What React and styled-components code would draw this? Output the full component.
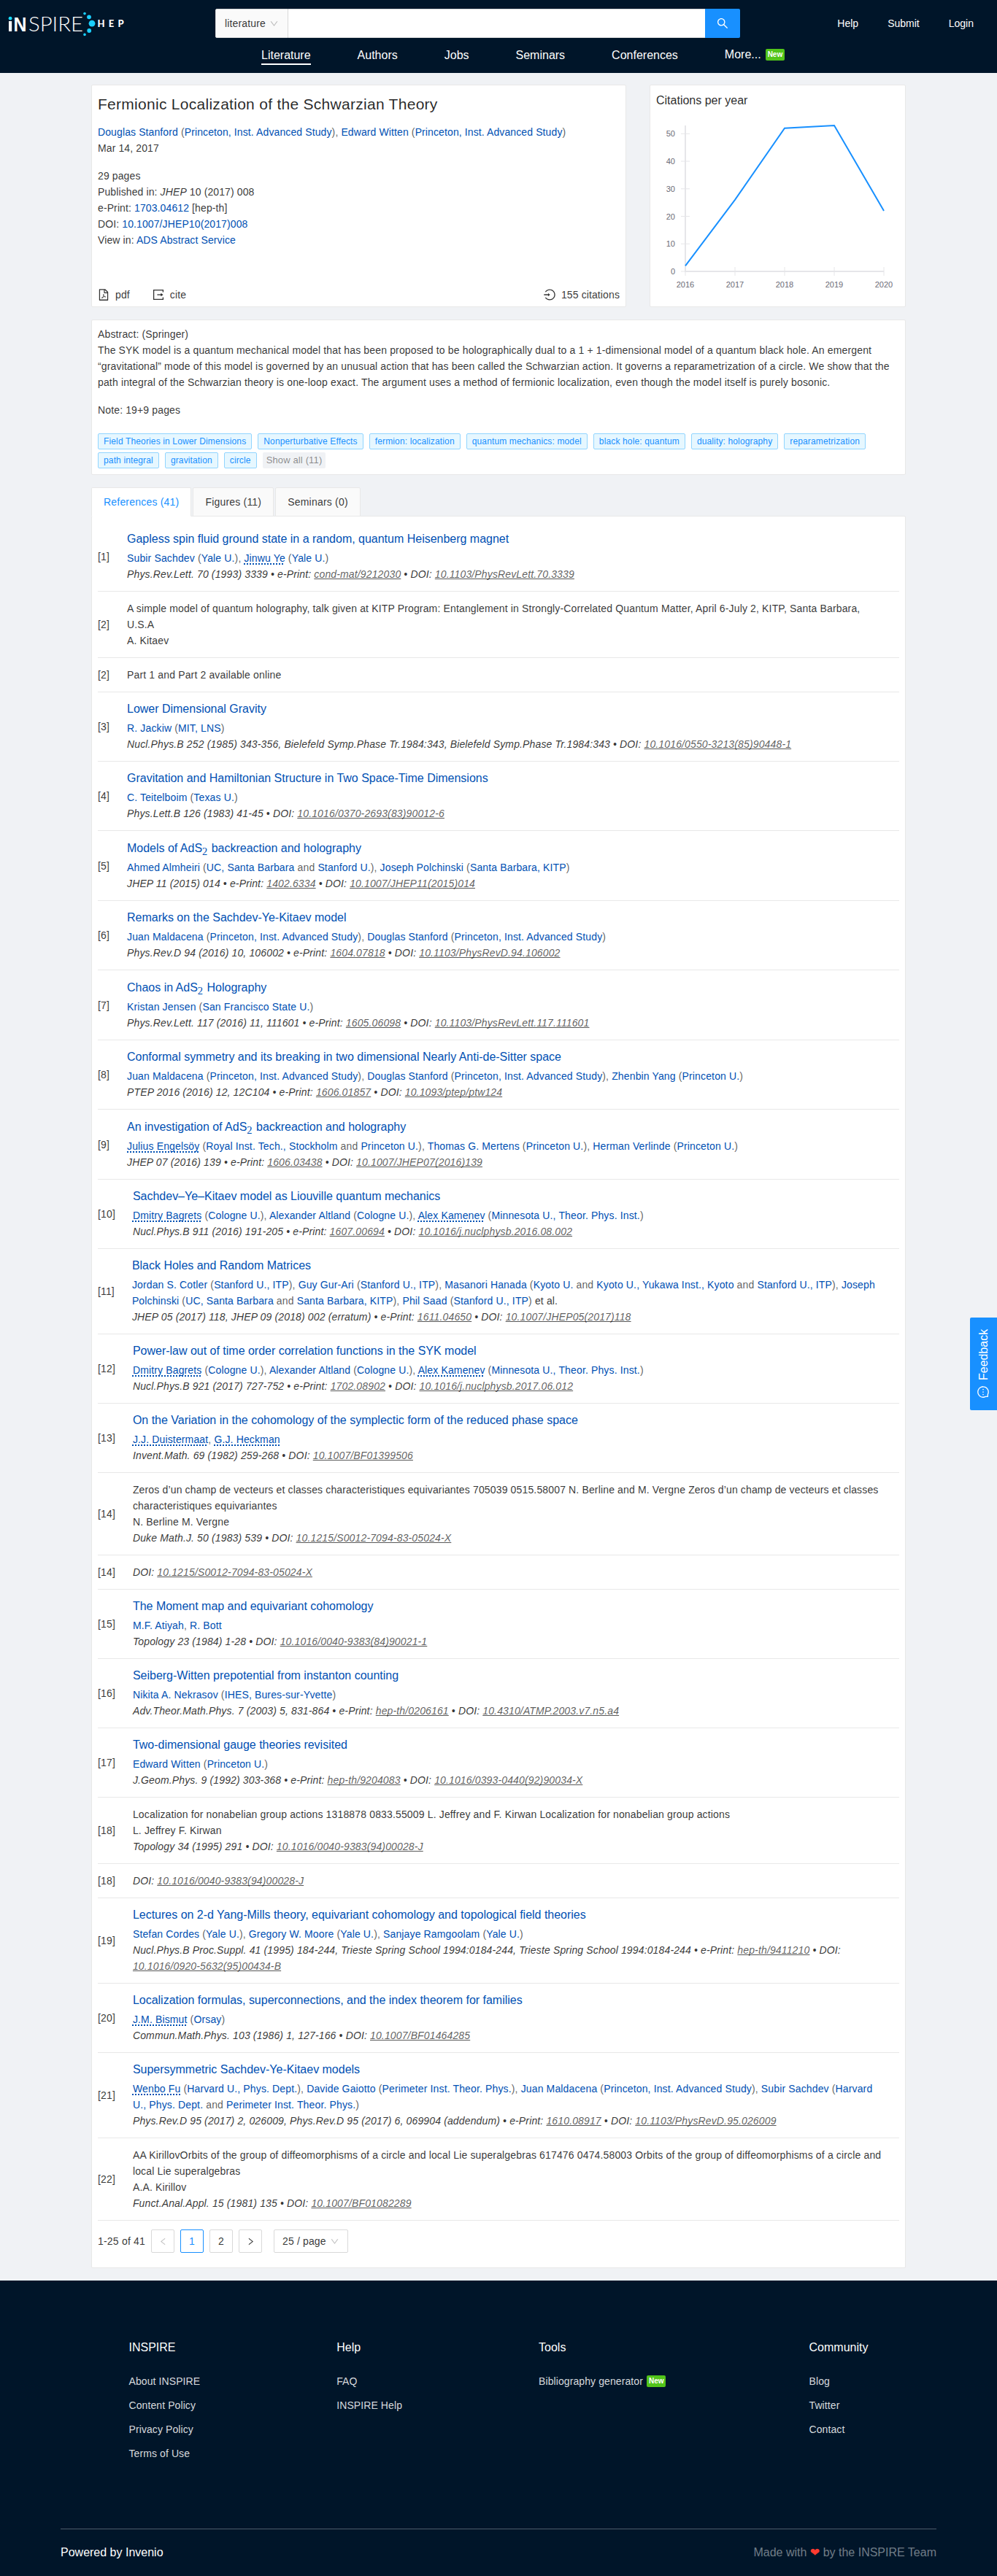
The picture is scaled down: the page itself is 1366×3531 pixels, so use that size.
import React from 'react';
import styled, { createGlobalStyle, css } from 'styled-components';
import {
  AiOutlineSearch,
  AiOutlineDown,
  AiOutlineFilePdf,
  AiOutlineLogin,
  AiOutlineLeft,
  AiOutlineRight,
  AiOutlineMessage,
} from 'react-icons/ai';

const GlobalStyle = createGlobalStyle`
  *, *::before, *::after { box-sizing: border-box; }
  body {
    margin: 0;
    background: #f0f2f5;
    color: rgba(0, 0, 0, 0.8);
    font-family: "Liberation Sans", Arial, sans-serif;
    font-size: 14px;
    line-height: 22px;
    letter-spacing: 0.14px;
    font-variant: tabular-nums;
  }
  a { color: #0050b3; text-decoration: none; }
  svg { display: block; }
`;

/* ---------- header ---------- */

const Header = styled.header`
  height: 100px;
  background: #001529;
  color: #fff;
`;

const TopBar = styled.div`
  height: 64px;
  display: flex;
  align-items: center;
`;

const LogoBox = styled.div`
  width: 295px;
  height: 64px;
  padding-left: 8px;
  letter-spacing: 0;
`;

const SearchBox = styled.div`
  width: 719px;
  height: 40px;
  display: flex;
`;

const ScopeSelect = styled.div`
  width: 100px;
  padding: 0 12px;
  display: flex;
  align-items: center;
  justify-content: space-between;
  background: #fafafa;
  border: 1px solid #d9d9d9;
  border-radius: 2px 0 0 2px;
  color: rgba(0, 0, 0, 0.8);
  svg { color: rgba(0, 0, 0, 0.25); }
`;

const SearchInput = styled.div`
  flex: 1;
  background: #fff;
  border: 1px solid #d9d9d9;
  border-width: 1px 0;
`;

const SearchButton = styled.div`
  width: 48px;
  display: flex;
  align-items: center;
  justify-content: center;
  background: #1890ff;
  border-radius: 0 2px 2px 0;
`;

const UserLinks = styled.nav`
  margin-left: auto;
  padding-right: 32px;
  display: flex;
  gap: 40px;
  letter-spacing: 0;
  a { color: #fff; }
`;

const MainNav = styled.nav`
  padding: 1px 0 0 358px;
  display: flex;
  gap: 64px;
  font-size: 16px;
  line-height: 22px;
  letter-spacing: 0;
`;

const NavLink = styled.a`
  height: 24px;
  display: flex;
  color: #fff;
  ${(p) => p.$active && css`border-bottom: 2px solid #fff;`}
  ${(p) => p.$raised && css`margin-top: -1px;`}
`;

const NewBadge = styled.span`
  display: inline-block;
  height: 16px;
  margin: ${(p) => p.$margin || '0'};
  padding: 0 3px;
  border-radius: 2px;
  background: #52c41a;
  color: #fff;
  font-size: 10px;
  font-weight: bold;
  line-height: 16px;
  letter-spacing: 0;
`;

function Logo() {
  return (
    <svg width="165" height="64" viewBox="8 0 165 64" fontFamily="Liberation Sans">
      <circle cx="14.1" cy="25.2" r="2.4" fill="#1bdcff" />
      <rect x="12" y="29" width="4.2" height="14" fill="#fff" />
      <text x="18.6" y="43" fontSize="27" fontWeight="700" fill="#fff" textLength="18" lengthAdjust="spacingAndGlyphs">N</text>
      <text x="39" y="43" fontSize="27" fontFamily="Lato" fontWeight="300" fill="#fff" textLength="75" lengthAdjust="spacingAndGlyphs">SPIRE</text>
      <g fill="#1bcfff">
        <circle cx="116" cy="18.6" r="1.8" />
        <circle cx="122" cy="23.3" r="2.9" />
        <circle cx="126" cy="32.2" r="4.4" />
        <circle cx="122.2" cy="42" r="2.9" />
        <circle cx="116" cy="47.4" r="1.8" />
      </g>
      <text x="133.6" y="37" fontSize="13" fontFamily="Lato" fontWeight="900" fill="#fff" textLength="36" lengthAdjust="spacing">HEP</text>
    </svg>
  );
}

/* ---------- cards ---------- */

const Page = styled.main`
  width: 1116px;
  margin: 16px 0 0 125px;
`;

const Card = styled.section`
  background: #fff;
  border: 1px solid #e8e8e8;
  border-radius: 2px;
  padding: 8px;
`;

const SummaryRow = styled.div`
  display: flex;
  justify-content: space-between;
  height: 305px;
`;

const RecordCard = styled(Card)`
  width: 733px;
  display: flex;
  flex-direction: column;
  letter-spacing: 0.11px;
`;

const RecordTitle = styled.h1`
  margin: 2px 0 11px;
  font-size: 21px;
  line-height: 32px;
  font-weight: normal;
  letter-spacing: 0.28px;
  color: rgba(0, 0, 0, 0.85);
`;

const Line = styled.div`
  ${(p) => p.$gap && css`margin-top: 16px;`}
  ${(p) => p.$wide && css`letter-spacing: 0.15px;`}
`;

const Muted = styled.span`
  color: rgba(0, 0, 0, 0.65);
`;

const Actions = styled.div`
  margin-top: auto;
  margin-bottom: -3px;
  display: flex;
  gap: 24px;
`;

const Action = styled.span`
  display: flex;
  align-items: center;
  gap: 7px;
  margin-left: ${(p) => (p.$end ? 'auto' : '-1px')};
  padding-right: ${(p) => (p.$end ? '0' : '7px')};
`;

const ChartCard = styled(Card)`
  width: 351px;
`;

const ChartTitle = styled.h2`
  margin: 1px 0 0;
  font-size: 16px;
  line-height: 24px;
  font-weight: normal;
  letter-spacing: 0;
  color: rgba(0, 0, 0, 0.85);
`;

const AbstractCard = styled(Card)`
  height: 213px;
  margin-top: 17px;
`;

const Tags = styled.div`
  display: flex;
  flex-wrap: wrap;
  gap: 4px 8px;
  margin-top: 21px;
`;

const Tag = styled.span`
  height: 22px;
  padding: ${(p) => (p.$more ? '0 5px' : '0 7px')};
  border: ${(p) => (p.$more ? '0' : '1px solid #91d5ff')};
  border-radius: 2px;
  background: ${(p) => (p.$more ? '#f0f2f5' : '#e6f7ff')};
  color: ${(p) => (p.$more ? 'rgba(0,0,0,.45)' : '#1890ff')};
  font-size: ${(p) => (p.$more ? '13px' : '12px')};
  line-height: ${(p) => (p.$more ? '22px' : '20px')};
  letter-spacing: 0.14px;
`;

const Tabs = styled.div`
  display: flex;
  gap: 2px;
  height: 40px;
  margin: 17px 0 -1px;
`;

const Tab = styled.div`
  padding: 0 16px;
  line-height: 38px;
  border: 1px solid #e8e8e8;
  border-bottom-color: ${(p) => (p.$active ? '#fff' : '#e8e8e8')};
  border-radius: 2px 2px 0 0;
  background: ${(p) => (p.$active ? '#fff' : '#fafafa')};
  color: ${(p) => (p.$active ? '#1890ff' : 'rgba(0,0,0,.8)')};
  letter-spacing: 0.2px;
  position: relative;
`;

function ExportIcon() {
  return (
    <svg width="18" height="18" viewBox="0 0 18 18" fill="none" stroke="currentColor" strokeWidth="1.3">
      <path d="M15.4 5.4V2.6H2.6V15.4H15.4V12.6" />
      <path d="M7.4 9H13.4" />
      <path d="M12.4 6.8L15.6 9L12.4 11.2Z" fill="currentColor" stroke="none" />
    </svg>
  );
}

/* ---------- chart ---------- */

const points = [[2016, 2], [2017, 26], [2018, 52], [2019, 53], [2020, 22]];
const xOf = (year) => 40 + (year - 2016) * 68;
const yOf = (n) => 222 - n * 3.774;

function CitationChart() {
  return (
    <svg width="333" height="262" viewBox="0 0 333 262" fontSize="11" fill="#6b6b76" fontFamily="Liberation Sans" letterSpacing="0">
      <g stroke="#e6e6e9" strokeWidth="1">
        {[0, 10, 20, 30, 40, 50].map((n) => <line key={n} x1="34" x2="46" y1={yOf(n)} y2={yOf(n)} />)}
        {points.map(([y]) => <line key={y} x1={xOf(y)} x2={xOf(y)} y1="216" y2="228" />)}
      </g>
      <path d="M40 22V222H312" fill="none" stroke="#e6e6e9" strokeWidth="2" />
      {[0, 10, 20, 30, 40, 50].map((n) => <text key={n} x="26" y={yOf(n) + 4} textAnchor="end">{n}</text>)}
      {points.map(([y]) => <text key={y} x={xOf(y)} y="244" textAnchor="middle">{y}</text>)}
      <polyline points={points.map(([y, n]) => `${xOf(y)},${yOf(n)}`).join(' ')} fill="none" stroke="#1890ff" strokeWidth="2" />
    </svg>
  );
}

/* ---------- references ---------- */

const Item = styled.div`
  display: flex;
  align-items: center;
  gap: 24px;
  padding: 12px 21px 12px 0;
  border-bottom: 1px solid #e8e8e8;
`;

const Label = styled.div`
  flex: none;
`;

const ItemTitle = styled.div`
  height: ${(p) => (p.$math ? 27 : 26)}px;
  padding-top: ${(p) => (p.$math ? 1 : 0)}px;
  font-size: 16px;
  line-height: 22px;
  letter-spacing: -0.01px;
`;

const MathSub = styled.span`
  font-family: "Liberation Serif", serif;
  font-size: 14.5px;
  position: relative;
  top: 4px;
  margin-right: 1px;
`;

const AuthorLink = styled.a`
  ${(p) => p.$dotted && css`
    text-decoration: underline dotted;
    text-decoration-thickness: 1.5px;
    text-underline-offset: 2px;
    text-decoration-skip-ink: none;
  `}
`;

const Publication = styled.div`
  font-style: italic;
  a { color: rgba(0, 0, 0, 0.65); text-decoration: underline; text-decoration-skip-ink: none; }
`;

// Authors are written "Name|Affiliation|Affiliation"; a leading * marks a name without a profile.
const refs = [
  { l: 1, t: 'Gapless spin fluid ground state in a random, quantum Heisenberg magnet', a: ['Subir Sachdev|Yale U.', '*Jinwu Ye|Yale U.'], p: 'Phys.Rev.Lett. 70 (1993) 3339', e: 'cond-mat/9212030', d: '10.1103/PhysRevLett.70.3339' },
  { l: 2, x: ['A simple model of quantum holography, talk given at KITP Program: Entanglement in Strongly-Correlated Quantum Matter, April 6-July 2, KITP, Santa Barbara, U.S.A', 'A. Kitaev'] },
  { l: 2, x: ['Part 1 and Part 2 available online'] },
  { l: 3, t: 'Lower Dimensional Gravity', a: ['R. Jackiw|MIT, LNS'], p: 'Nucl.Phys.B 252 (1985) 343-356, Bielefeld Symp.Phase Tr.1984:343, Bielefeld Symp.Phase Tr.1984:343', d: '10.1016/0550-3213(85)90448-1' },
  { l: 4, t: 'Gravitation and Hamiltonian Structure in Two Space-Time Dimensions', a: ['C. Teitelboim|Texas U.'], p: 'Phys.Lett.B 126 (1983) 41-45', d: '10.1016/0370-2693(83)90012-6' },
  { l: 5, t: 'Models of AdS_2 backreaction and holography', a: ['Ahmed Almheiri|UC, Santa Barbara|Stanford U.', 'Joseph Polchinski|Santa Barbara, KITP'], p: 'JHEP 11 (2015) 014', e: '1402.6334', d: '10.1007/JHEP11(2015)014' },
  { l: 6, t: 'Remarks on the Sachdev-Ye-Kitaev model', a: ['Juan Maldacena|Princeton, Inst. Advanced Study', 'Douglas Stanford|Princeton, Inst. Advanced Study'], p: 'Phys.Rev.D 94 (2016) 10, 106002', e: '1604.07818', d: '10.1103/PhysRevD.94.106002' },
  { l: 7, t: 'Chaos in AdS_2 Holography', a: ['Kristan Jensen|San Francisco State U.'], p: 'Phys.Rev.Lett. 117 (2016) 11, 111601', e: '1605.06098', d: '10.1103/PhysRevLett.117.111601' },
  { l: 8, t: 'Conformal symmetry and its breaking in two dimensional Nearly Anti-de-Sitter space', a: ['Juan Maldacena|Princeton, Inst. Advanced Study', 'Douglas Stanford|Princeton, Inst. Advanced Study', 'Zhenbin Yang|Princeton U.'], p: 'PTEP 2016 (2016) 12, 12C104', e: '1606.01857', d: '10.1093/ptep/ptw124' },
  { l: 9, t: 'An investigation of AdS_2 backreaction and holography', a: ['*Julius Engelsöy|Royal Inst. Tech., Stockholm|Princeton U.', 'Thomas G. Mertens|Princeton U.', 'Herman Verlinde|Princeton U.'], p: 'JHEP 07 (2016) 139', e: '1606.03438', d: '10.1007/JHEP07(2016)139' },
  { l: 10, t: 'Sachdev–Ye–Kitaev model as Liouville quantum mechanics', a: ['*Dmitry Bagrets|Cologne U.', 'Alexander Altland|Cologne U.', '*Alex Kamenev|Minnesota U., Theor. Phys. Inst.'], p: 'Nucl.Phys.B 911 (2016) 191-205', e: '1607.00694', d: '10.1016/j.nuclphysb.2016.08.002' },
  { l: 11, t: 'Black Holes and Random Matrices', a: ['Jordan S. Cotler|Stanford U., ITP', 'Guy Gur-Ari|Stanford U., ITP', 'Masanori Hanada|Kyoto U.|Kyoto U., Yukawa Inst., Kyoto|Stanford U., ITP', 'Joseph Polchinski|UC, Santa Barbara|Santa Barbara, KITP', 'Phil Saad|Stanford U., ITP'], etal: true, p: 'JHEP 05 (2017) 118, JHEP 09 (2018) 002 (erratum)', e: '1611.04650', d: '10.1007/JHEP05(2017)118' },
  { l: 12, t: 'Power-law out of time order correlation functions in the SYK model', a: ['*Dmitry Bagrets|Cologne U.', 'Alexander Altland|Cologne U.', '*Alex Kamenev|Minnesota U., Theor. Phys. Inst.'], p: 'Nucl.Phys.B 921 (2017) 727-752', e: '1702.08902', d: '10.1016/j.nuclphysb.2017.06.012' },
  { l: 13, t: 'On the Variation in the cohomology of the symplectic form of the reduced phase space', a: ['*J.J. Duistermaat', '*G.J. Heckman'], p: 'Invent.Math. 69 (1982) 259-268', d: '10.1007/BF01399506' },
  { l: 14, x: ['Zeros d’un champ de vecteurs et classes characteristiques equivariantes 705039 0515.58007 N. Berline and M. Vergne Zeros d’un champ de vecteurs et classes characteristiques equivariantes', 'N. Berline M. Vergne'], p: 'Duke Math.J. 50 (1983) 539', d: '10.1215/S0012-7094-83-05024-X' },
  { l: 14, d: '10.1215/S0012-7094-83-05024-X' },
  { l: 15, t: 'The Moment map and equivariant cohomology', a: ['M.F. Atiyah', 'R. Bott'], p: 'Topology 23 (1984) 1-28', d: '10.1016/0040-9383(84)90021-1' },
  { l: 16, t: 'Seiberg-Witten prepotential from instanton counting', a: ['Nikita A. Nekrasov|IHES, Bures-sur-Yvette'], p: 'Adv.Theor.Math.Phys. 7 (2003) 5, 831-864', e: 'hep-th/0206161', d: '10.4310/ATMP.2003.v7.n5.a4' },
  { l: 17, t: 'Two-dimensional gauge theories revisited', a: ['Edward Witten|Princeton U.'], p: 'J.Geom.Phys. 9 (1992) 303-368', e: 'hep-th/9204083', d: '10.1016/0393-0440(92)90034-X' },
  { l: 18, x: ['Localization for nonabelian group actions 1318878 0833.55009 L. Jeffrey and F. Kirwan Localization for nonabelian group actions', 'L. Jeffrey F. Kirwan'], p: 'Topology 34 (1995) 291', d: '10.1016/0040-9383(94)00028-J' },
  { l: 18, d: '10.1016/0040-9383(94)00028-J' },
  { l: 19, t: 'Lectures on 2-d Yang-Mills theory, equivariant cohomology and topological field theories', a: ['Stefan Cordes|Yale U.', 'Gregory W. Moore|Yale U.', 'Sanjaye Ramgoolam|Yale U.'], p: 'Nucl.Phys.B Proc.Suppl. 41 (1995) 184-244, Trieste Spring School 1994:0184-244, Trieste Spring School 1994:0184-244', e: 'hep-th/9411210', d: '10.1016/0920-5632(95)00434-B' },
  { l: 20, t: 'Localization formulas, superconnections, and the index theorem for families', a: ['*J.M. Bismut|Orsay'], p: 'Commun.Math.Phys. 103 (1986) 1, 127-166', d: '10.1007/BF01464285' },
  { l: 21, t: 'Supersymmetric Sachdev-Ye-Kitaev models', a: ['*Wenbo Fu|Harvard U., Phys. Dept.', 'Davide Gaiotto|Perimeter Inst. Theor. Phys.', 'Juan Maldacena|Princeton, Inst. Advanced Study', 'Subir Sachdev|Harvard U., Phys. Dept.|Perimeter Inst. Theor. Phys.'], p: 'Phys.Rev.D 95 (2017) 2, 026009, Phys.Rev.D 95 (2017) 6, 069904 (addendum)', e: '1610.08917', d: '10.1103/PhysRevD.95.026009' },
  { l: 22, x: ['AA KirillovOrbits of the group of diffeomorphisms of a circle and local Lie superalgebras 617476 0474.58003 Orbits of the group of diffeomorphisms of a circle and local Lie superalgebras', 'A.A. Kirillov'], p: 'Funct.Anal.Appl. 15 (1981) 135', d: '10.1007/BF01082289' },
];

function Authors({ list, etal }) {
  return (
    <Line>
      {list.map((entry, i) => {
        const [name, ...affs] = entry.split('|');
        const dotted = name.startsWith('*');
        return (
          <React.Fragment key={entry}>
            {i > 0 && <Muted>, </Muted>}
            <AuthorLink $dotted={dotted}>{dotted ? name.slice(1) : name}</AuthorLink>
            {affs.length > 0 && (
              <Muted>
                {' ('}
                {affs.map((aff, j) => (
                  <React.Fragment key={aff}>{j > 0 && ' and '}<a>{aff}</a></React.Fragment>
                ))}
                )
              </Muted>
            )}
          </React.Fragment>
        );
      })}
      {etal && ' et al.'}
    </Line>
  );
}

function Reference({ r }) {
  const [before, after] = r.t ? r.t.split('_2') : [];
  return (
    <Item>
      <Label>[{r.l}]</Label>
      <div>
        {r.t && (
          <ItemTitle $math={after !== undefined}>
            <a>{before}{after !== undefined && <><MathSub>2</MathSub>{after}</>}</a>
          </ItemTitle>
        )}
        {r.x && r.x.map((text) => <Line key={text} $wide>{text}</Line>)}
        {r.a && <Authors list={r.a} etal={r.etal} />}
        {r.d && (
          <Publication>
            {r.p && `${r.p} • `}
            {r.e && <>e-Print: <a>{r.e}</a>{' • '}</>}
            DOI: <a>{r.d}</a>
          </Publication>
        )}
      </div>
    </Item>
  );
}

const Pagination = styled.div`
  display: flex;
  align-items: center;
  gap: 8px;
  padding: 12px 0;
`;

const PageButton = styled.span`
  width: ${(p) => (p.$wide ? '102px' : '32px')};
  height: 32px;
  margin-left: ${(p) => (p.$wide ? '8px' : '0')};
  padding: ${(p) => (p.$wide ? '0 11px' : '0')};
  display: flex;
  align-items: center;
  justify-content: ${(p) => (p.$wide ? 'space-between' : 'center')};
  border: 1px solid ${(p) => (p.$active ? '#1890ff' : '#d9d9d9')};
  border-radius: 2px;
  color: ${(p) => (p.$active ? '#1890ff' : p.$disabled ? 'rgba(0,0,0,.25)' : 'rgba(0,0,0,.8)')};
`;

const PageRange = styled.span`
  letter-spacing: 0.2px;
`;

const Caret = styled(AiOutlineDown)`
  color: rgba(0, 0, 0, 0.25);
`;

/* ---------- footer ---------- */

const Footer = styled.footer`
  height: 405px;
  margin-top: 17px;
  padding: 80px 83px 0;
  background: #001529;
  color: #fff;
`;

const FooterColumns = styled.div`
  height: 260px;
  display: flex;
  justify-content: space-around;
`;

const FooterColumn = styled.div`
  h2 {
    margin: 0 0 23px;
    font-size: 16px;
    line-height: 24px;
    font-weight: normal;
    letter-spacing: 0;
  }
`;

const FooterLink = styled.a`
  display: flex;
  align-items: center;
  margin-bottom: 11px;
  color: rgba(255, 255, 255, 0.85);
  letter-spacing: 0.09px;
`;

const FooterBottom = styled.div`
  border-top: 1px solid rgba(255, 255, 255, 0.3);
  padding-top: 20px;
  display: flex;
  justify-content: space-between;
  font-size: 16px;
  line-height: 24px;
  letter-spacing: 0;
`;

const MadeWith = styled.span`
  color: rgba(255, 255, 255, 0.45);
`;

const Heart = styled.span`
  color: #ff3b30;
  font-family: "DejaVu Sans", sans-serif;
  line-height: 1;
`;

const Feedback = styled.div`
  position: absolute;
  top: 1806px;
  right: 0;
  width: 37px;
  height: 127px;
  display: flex;
  align-items: center;
  justify-content: center;
  gap: 7px;
  writing-mode: vertical-rl;
  transform: rotate(180deg);
  background: #1890ff;
  border-radius: 0 2px 2px 0;
  color: #fff;
  font-size: 16px;
  letter-spacing: 0;
  svg { transform: rotate(90deg); }
`;

const footerColumns = [
  ['INSPIRE', ['About INSPIRE', 'Content Policy', 'Privacy Policy', 'Terms of Use']],
  ['Help', ['FAQ', 'INSPIRE Help']],
  ['Tools', ['Bibliography generator']],
  ['Community', ['Blog', 'Twitter', 'Contact']],
];

const keywords = ['Field Theories in Lower Dimensions', 'Nonperturbative Effects', 'fermion: localization', 'quantum mechanics: model', 'black hole: quantum', 'duality: holography', 'reparametrization', 'path integral', 'gravitation', 'circle'];

export default function App() {
  return (
    <>
      <GlobalStyle />
      <Header>
        <TopBar>
          <LogoBox><Logo /></LogoBox>
          <SearchBox>
            <ScopeSelect>literature <AiOutlineDown size={13} /></ScopeSelect>
            <SearchInput />
            <SearchButton><AiOutlineSearch size={18} /></SearchButton>
          </SearchBox>
          <UserLinks><a>Help</a><a>Submit</a><a>Login</a></UserLinks>
        </TopBar>
        <MainNav>
          <NavLink $active>Literature</NavLink>
          <NavLink>Authors</NavLink>
          <NavLink>Jobs</NavLink>
          <NavLink>Seminars</NavLink>
          <NavLink>Conferences</NavLink>
          <NavLink $raised>More...<NewBadge $margin="3px 0 0 6px">New</NewBadge></NavLink>
        </MainNav>
      </Header>

      <Page>
        <SummaryRow>
          <RecordCard>
            <RecordTitle>Fermionic Localization of the Schwarzian Theory</RecordTitle>
            <Authors list={['Douglas Stanford|Princeton, Inst. Advanced Study', 'Edward Witten|Princeton, Inst. Advanced Study']} />
            <Line>Mar 14, 2017</Line>
            <Line $gap>29 pages</Line>
            <Line>Published in: <i>JHEP</i> 10 (2017) 008</Line>
            <Line>e-Print: <a>1703.04612</a> [hep-th]</Line>
            <Line>DOI: <a>10.1007/JHEP10(2017)008</a></Line>
            <Line>View in: <a>ADS Abstract Service</a></Line>
            <Actions>
              <Action><AiOutlineFilePdf size={18} />pdf</Action>
              <Action><ExportIcon />cite</Action>
              <Action $end><AiOutlineLogin size={18} />155 citations</Action>
            </Actions>
          </RecordCard>
          <ChartCard>
            <ChartTitle>Citations per year</ChartTitle>
            <CitationChart />
          </ChartCard>
        </SummaryRow>

        <AbstractCard>
          <Line>Abstract: (Springer)</Line>
          <Line $wide>
            The SYK model is a quantum mechanical model that has been proposed to be holographically dual to a 1 + 1-dimensional model of a quantum black hole. An emergent “gravitational” mode of this model is governed by an unusual action that has been called the Schwarzian action. It governs a reparametrization of a circle. We show that the path integral of the Schwarzian theory is one-loop exact. The argument uses a method of fermionic localization, even though the model itself is purely bosonic.
          </Line>
          <Line $gap>Note: 19+9 pages</Line>
          <Tags>
            {keywords.map((k) => <Tag key={k}>{k}</Tag>)}
            <Tag $more>Show all (11)</Tag>
          </Tags>
        </AbstractCard>

        <Tabs>
          <Tab $active>References (41)</Tab>
          <Tab>Figures (11)</Tab>
          <Tab>Seminars (0)</Tab>
        </Tabs>
        <Card>
          {refs.map((r, i) => <Reference key={i} r={r} />)}
          <Pagination>
            <PageRange>1-25 of 41</PageRange>
            <PageButton $disabled><AiOutlineLeft size={13} /></PageButton>
            <PageButton $active>1</PageButton>
            <PageButton>2</PageButton>
            <PageButton><AiOutlineRight size={13} /></PageButton>
            <PageButton $wide>25 / page <Caret size={13} /></PageButton>
          </Pagination>
        </Card>
      </Page>

      <Footer>
        <FooterColumns>
          {footerColumns.map(([title, links]) => (
            <FooterColumn key={title}>
              <h2>{title}</h2>
              {links.map((link) => (
                <FooterLink key={link}>
                  {link}
                  {title === 'Tools' && <NewBadge $margin="0 9px 0 5px">New</NewBadge>}
                </FooterLink>
              ))}
            </FooterColumn>
          ))}
        </FooterColumns>
        <FooterBottom>
          <span>Powered by Invenio</span>
          <MadeWith>Made with <Heart>❤</Heart> by the INSPIRE Team</MadeWith>
        </FooterBottom>
      </Footer>

      <Feedback><AiOutlineMessage size={18} />Feedback</Feedback>
    </>
  );
}
